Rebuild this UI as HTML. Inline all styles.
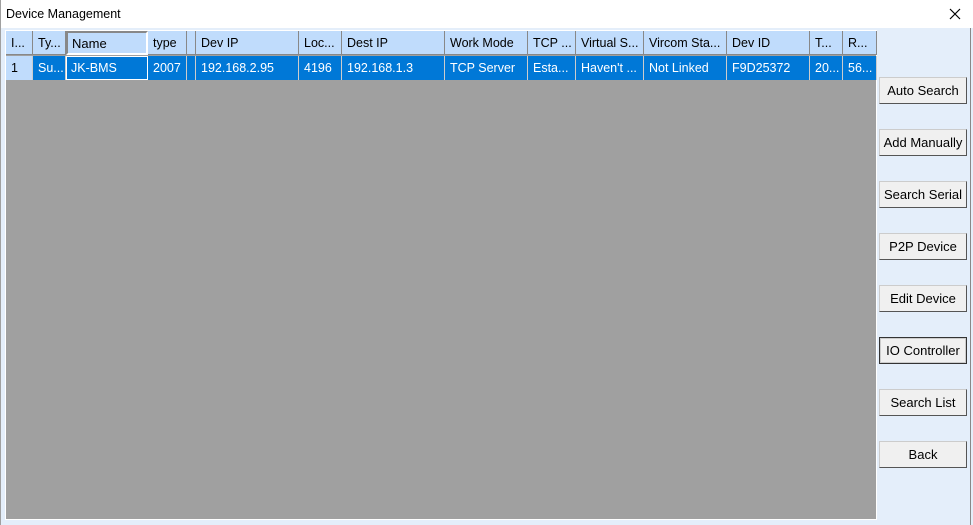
<!DOCTYPE html>
<html><head><style>
body{margin:0;width:973px;height:525px;overflow:hidden;background:#e4eefa;font-family:"Liberation Sans",Arial,sans-serif;position:relative}
.title{position:absolute;left:0;top:0;width:973px;height:28px;background:#fff;}
.title span{position:absolute;left:6px;top:7px;font-size:12.5px;color:#000}
.x{position:absolute;left:949px;top:8px}
.edgeL{position:absolute;left:0;top:0;width:1px;height:525px;background:#a0a0a0}
.edgeR{position:absolute;left:970px;top:28px;width:1px;height:497px;background:#888}
.grid{position:absolute;left:5px;top:30px;width:872px;height:490px;background:#a0a0a0;border:1px solid #fff;box-sizing:border-box}
.c{position:absolute;height:24px;box-sizing:border-box;line-height:24px;padding-left:5px;white-space:nowrap;overflow:hidden;color:#000;font-size:12.5px}
.h{top:31px;background:#c0dcfc;border-right:1px solid #888;border-bottom:1px solid #888}
.d{top:56px;background:#0078d7;color:#fff;border-right:1px solid #ccc}
.btn{position:absolute;left:879px;width:88px;height:27px;background:#f0f0f0;border:1px solid #ccc;border-right-color:#555;border-bottom-color:#555;box-sizing:border-box;font-size:13px;text-align:center;line-height:25px;color:#000}
</style></head><body>
<div class="title"><span>Device Management</span><svg class="x" width="12" height="12" viewBox="0 0 12 12"><path d="M1 1L11 11M11 1L1 11" stroke="#000" stroke-width="1.2"/></svg></div>
<div class="edgeL"></div><div class="edgeR"></div>
<div class="grid"></div>
<div class="c h" style="left:6px;width:27px">I...</div>
<div class="c h" style="left:33px;width:33px">Ty...</div>
<div class="c h" style="left:66px;width:82px;border:2px solid #888;border-right-color:#fff;border-bottom-color:#fff;line-height:22px;padding-left:4px;font-size:13px">Name</div>
<div class="c h" style="left:148px;width:39px">type</div>
<div class="c h" style="left:187px;width:9px"></div>
<div class="c h" style="left:196px;width:103px">Dev IP</div>
<div class="c h" style="left:299px;width:43px">Loc...</div>
<div class="c h" style="left:342px;width:103px">Dest IP</div>
<div class="c h" style="left:445px;width:83px">Work Mode</div>
<div class="c h" style="left:528px;width:48px">TCP ...</div>
<div class="c h" style="left:576px;width:68px">Virtual S...</div>
<div class="c h" style="left:644px;width:83px">Vircom Sta...</div>
<div class="c h" style="left:727px;width:83px">Dev ID</div>
<div class="c h" style="left:810px;width:33px">T...</div>
<div class="c h" style="left:843px;width:34px">R...</div>
<div class="c d" style="left:6px;width:27px;background:#c0dcfc;color:#000">1</div>
<div class="c d" style="left:33px;width:33px">Su...</div>
<div class="c d" style="left:66px;width:82px;border:1px solid #fff;line-height:22px;padding-left:4px">JK-BMS</div>
<div class="c d" style="left:148px;width:39px">2007</div>
<div class="c d" style="left:187px;width:9px"></div>
<div class="c d" style="left:196px;width:103px">192.168.2.95</div>
<div class="c d" style="left:299px;width:43px">4196</div>
<div class="c d" style="left:342px;width:103px">192.168.1.3</div>
<div class="c d" style="left:445px;width:83px">TCP Server</div>
<div class="c d" style="left:528px;width:48px">Esta...</div>
<div class="c d" style="left:576px;width:68px">Haven't ...</div>
<div class="c d" style="left:644px;width:83px">Not Linked</div>
<div class="c d" style="left:727px;width:83px">F9D25372</div>
<div class="c d" style="left:810px;width:33px">20...</div>
<div class="c d" style="left:843px;width:34px">56...</div>
<div class="btn" style="top:77px">Auto Search</div>
<div class="btn" style="top:129px">Add Manually</div>
<div class="btn" style="top:181px">Search Serial</div>
<div class="btn" style="top:233px">P2P Device</div>
<div class="btn" style="top:285px">Edit Device</div>
<div class="btn" style="top:337px;border:1px solid #333;box-shadow:inset 0 0 0 1px #ccc">IO Controller</div>
<div class="btn" style="top:389px">Search List</div>
<div class="btn" style="top:441px">Back</div>
</body></html>
